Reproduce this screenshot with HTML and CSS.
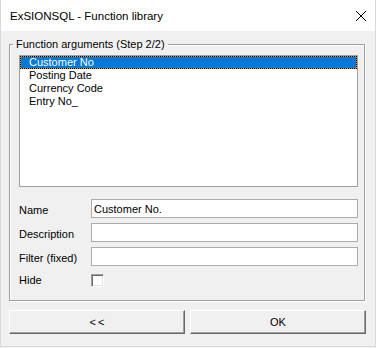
FILE: index.html
```html
<!DOCTYPE html>
<html lang="en">
<head>
  <meta charset="UTF-8">
  <title>ExSIONSQL - Function library</title>
  <meta name="viewport" content="width=device-width, initial-scale=1">
  <link rel="stylesheet" href="styles.css">
</head>
<body>

  <div class="window">
    <div class="titlebar">
      <span class="title">ExSIONSQL - Function library</span>
      <svg class="close" width="10" height="10" viewBox="0 0 10 10">
        <path d="M0 0 L10 10 M10 0 L0 10" stroke="#000" stroke-width="1" fill="none"/>
      </svg>
    </div>

    <div class="content">
      <fieldset class="group">
        <legend>Function arguments (Step 2/2)</legend>

        <div class="listbox">
          <div class="item selected">Customer No</div>
          <div class="item">Posting Date</div>
          <div class="item">Currency Code</div>
          <div class="item">Entry No_</div>
        </div>

        <div class="form">
          <label class="lbl">Name</label>
          <input class="field" type="text" value="Customer No.">
          <label class="lbl">Description</label>
          <input class="field" type="text">
          <label class="lbl">Filter (fixed)</label>
          <input class="field" type="text">
          <label class="lbl lbl-hide">Hide</label>
          <div class="check-cell"><span class="checkbox"></span></div>
        </div>
      </fieldset>

      <div class="buttons">
        <button class="btn btn-back">&lt;&lt;</button>
        <button class="btn">OK</button>
      </div>
    </div>
  </div>

</body>
</html>
```

FILE: styles.css
```css
body {
  margin: 0;
  font-family: 'Liberation Sans', Arial, sans-serif;
  font-size: 11px;
  color: #000;
  background: #f0f0f0;
}

.window {
  width: 376px;
  height: 347px;
  box-sizing: border-box;
  border: 1px solid #dadada;
  border-top: none;
  background: #f0f0f0;
}

.titlebar {
  height: 31px;
  background: #fff;
  display: flex;
  align-items: center;
  justify-content: space-between;
  padding: 0 9px 0 9px;
}

.title {
  font-size: 11.5px;
  padding-top: 1px;
}

.close {
  display: block;
  margin-top: 1px;
}

.content {
  padding: 0 9px 0 8px;
}

/* ===== GROUP BOX ==== */
.group {
  margin: 7px 1px 0 0;
  padding: 4px 6px 10px 9px;
  border: 1px solid #a0a0a0;
  box-shadow: inset 1px 1px #fff, 1px 1px #fff;
}

.group legend {
  padding: 0 3px;
  margin-left: -6px;
  line-height: 13px;
}

.listbox {
  height: 132px;
  box-sizing: border-box;
  border: 1px solid #a0a0a0;
  background: #fff;
}

.item {
  height: 13px;
  line-height: 13px;
  padding-left: 9px;
}

.item.selected {
  background: #0078d7;
  color: #fff;
  box-sizing: border-box;
  border: 1px solid #ff8c28;
  outline: 1px dotted #000;
  outline-offset: -1px;
  line-height: 11px;
  padding-left: 8px;
}

.form {
  display: grid;
  grid-template-columns: 72px 267px;
  grid-auto-rows: 19px;
  row-gap: 5px;
  margin-top: 12px;
}

.lbl {
  line-height: 19px;
  padding-top: 2px;
}

.lbl-hide {
  padding-top: 0;
}

.field {
  width: 267px;
  height: 19px;
  box-sizing: border-box;
  margin: 0;
  border: 1px solid #acacac;
  padding: 0 2px;
  font-family: 'Liberation Sans', Arial, sans-serif;
  font-size: 11px;
  background: #fff;
  outline: none;
}

.checkbox {
  display: block;
  width: 13px;
  height: 13px;
  box-sizing: border-box;
  margin-top: 3px;
  border: 1px solid;
  border-color: #a0a0a0 #fff #fff #a0a0a0;
  box-shadow: inset 1px 1px #696969, inset -1px -1px #e3e3e3;
  background: #fff;
}

/* ===== BUTTONS ==== */
.buttons {
  display: flex;
  gap: 5px;
  margin-top: 9px;
}

.btn {
  width: 176px;
  height: 24px;
  margin: 0;
  padding: 0;
  border: 1px solid;
  border-color: #fff #696969 #696969 #fff;
  box-shadow: inset -1px -1px #a0a0a0;
  background: #f0f0f0;
  font-family: 'Liberation Sans', Arial, sans-serif;
  font-size: 11px;
  color: #000;
}

.btn-back {
  letter-spacing: 2px;
  text-indent: 2px;
}
```
